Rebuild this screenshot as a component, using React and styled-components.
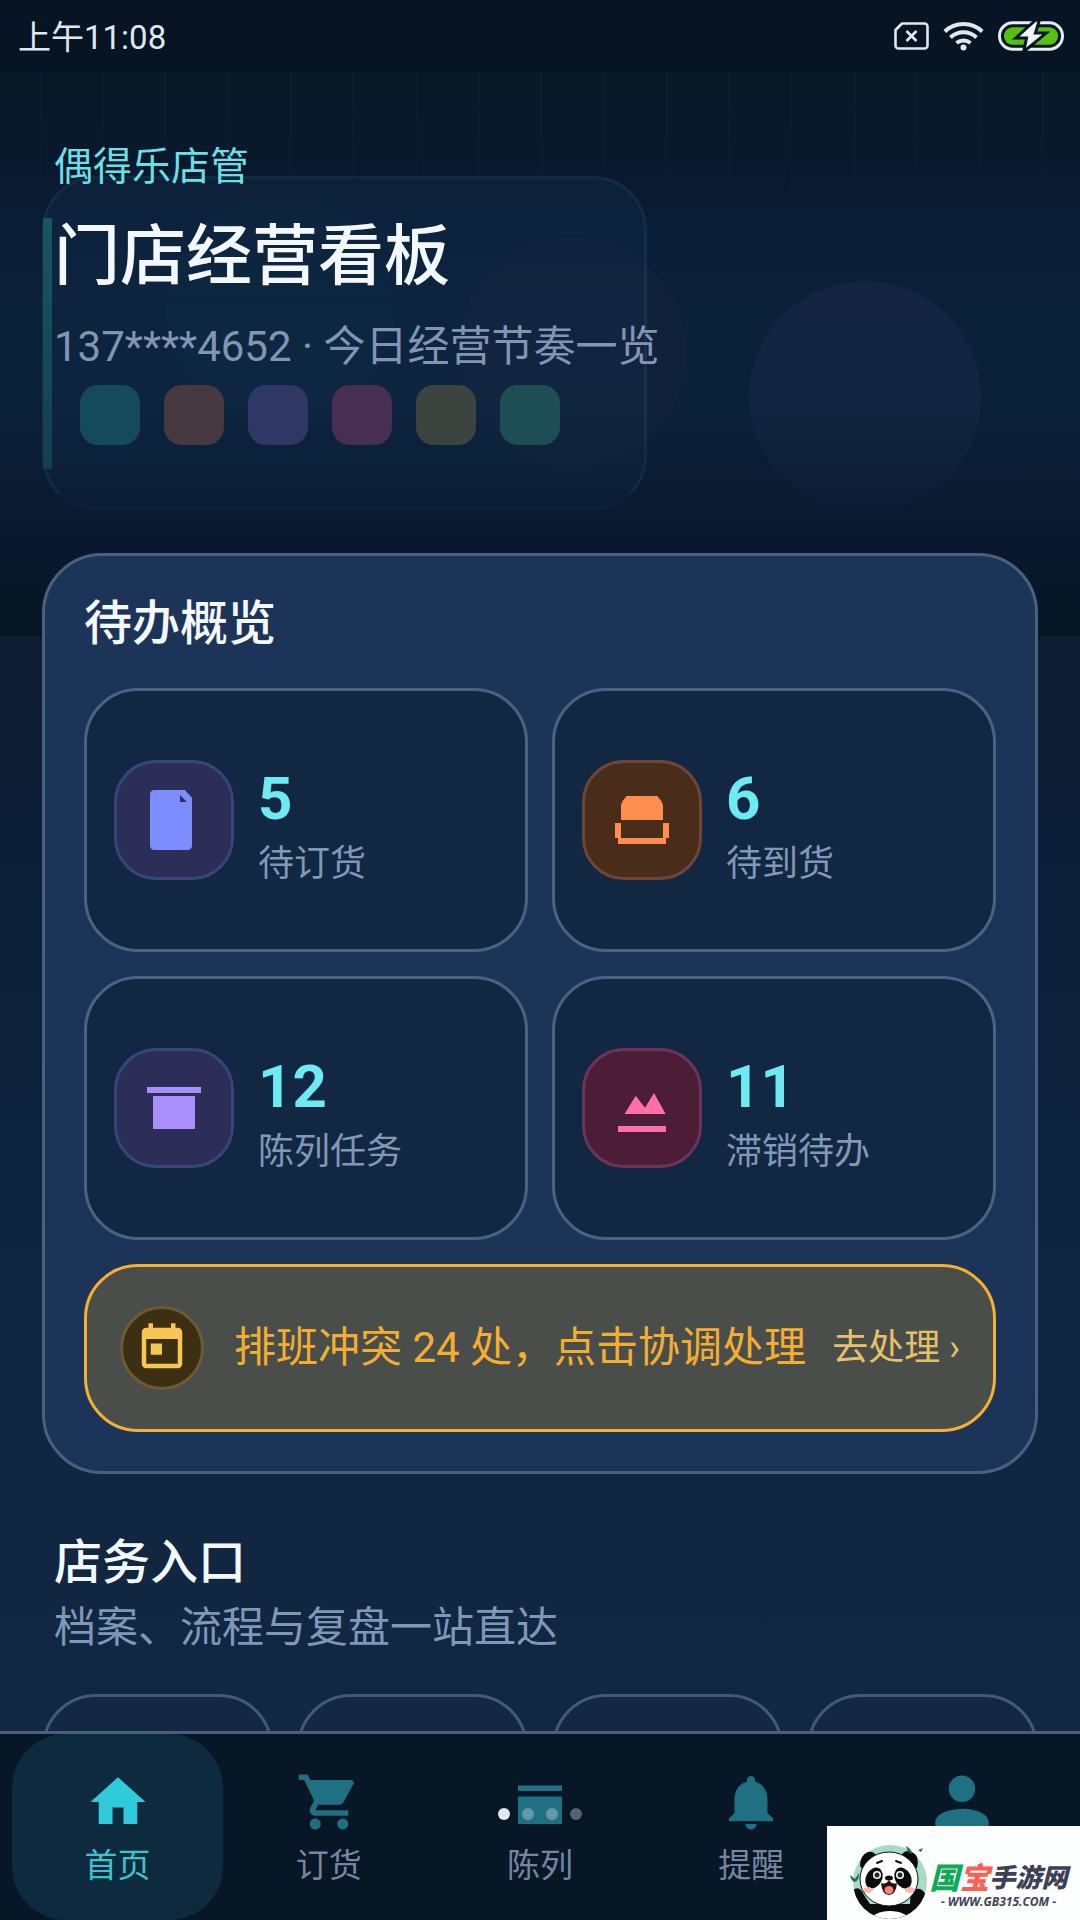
import React from "react";
import styled, { createGlobalStyle } from "styled-components";

const GlobalStyle = createGlobalStyle`
  *, *::before, *::after { box-sizing: border-box; }
  body {
    margin: 0;
    background: #0d1e33;
    color: #f3f8ff;
    font-family: Roboto, "Noto Sans CJK SC", sans-serif;
  }
  h1, h2, p, ul { margin: 0; padding: 0; }
  ul { list-style: none; }
  button { font: inherit; color: inherit; text-align: left; cursor: pointer; }
`;

const Screen = styled.div`
  position: relative;
  display: flex;
  flex-direction: column;
  height: 100vh;
  overflow: hidden;
  background: linear-gradient(180deg, #0c1c2f 0%, #0d1c30 34%, #0c1e37 44%, #0f2540 66%, #122842 90%);
`;

const StatusBar = styled.header`
  display: flex;
  align-items: center;
  justify-content: space-between;
  height: 72px;
  padding: 0 16px 0 18px;
  background: #061423;
  color: #dfe8f2;
`;

const Clock = styled.time`
  padding-top: 4px;
  font-size: 33px;
  line-height: 48px;
`;

const StatusIcons = styled.div`
  display: flex;
  align-items: center;
  gap: 14px;
`;

const Content = styled.main`
  flex: 1;
  min-height: 0;
  overflow-y: auto;
  scrollbar-width: none;
`;

const Hero = styled.section`
  position: relative;
  padding: 71px 54px 176px;
`;

const Backdrop = styled.div`
  position: absolute;
  inset: 0 0 -83px;
  overflow: hidden;
  background: linear-gradient(180deg, #081826 0%, #09182a 12%, #0b1d36 28%, #0b2039 44%, #0b2039 60%, #0b1b32 74%, #09182e 84%, #061621 100%);
`;

const BackdropDrawing = styled.svg`
  position: absolute;
  inset: 0;
  width: 100%;
  height: 100%;
`;

const GhostCard = styled.div`
  position: absolute;
  top: 104px;
  left: 42px;
  width: 56%;
  height: 334px;
  padding: 206px 35px 0;
  border: 3px solid rgba(70, 170, 180, 0.09);
  border-bottom-color: rgba(70, 170, 180, 0.02);
  border-radius: 54px;
  background: linear-gradient(180deg, rgba(24, 60, 96, 0.2), rgba(24, 60, 96, 0.12));
`;

const GhostBar = styled.div`
  position: absolute;
  top: 146px;
  left: 43px;
  width: 9px;
  height: 251px;
  background: linear-gradient(180deg, #175661, #143f50);
`;

const Swatches = styled.div`
  display: flex;
  gap: 24px;
`;

const Swatch = styled.span`
  width: 60px;
  height: 60px;
  border-radius: 18px;
  background: ${(p) => p.$color};
`;

const HeroText = styled.div`
  position: relative;
`;

const Brand = styled.p`
  font-size: 39px;
  line-height: 48px;
  color: #6ddfe6;
`;

const PageTitle = styled.h1`
  margin: 21px 0 15px;
  font-size: 66px;
  font-weight: 500;
  line-height: 90px;
`;

const Subtitle = styled.p`
  font-size: 42px;
  line-height: 60px;
  color: #8295b3;
`;

const Card = styled.section`
  position: relative;
  margin: 0 42px;
  padding: 39px;
  border: 3px solid #4a607e;
  border-radius: 60px;
  background: #1c3458;
`;

const SectionTitle = styled.h2`
  font-size: 48px;
  font-weight: 500;
  line-height: 58px;
`;

const StatGrid = styled.div`
  display: grid;
  grid-template-columns: 1fr 1fr;
  gap: 24px;
  margin: 35px 0 24px;
`;

const StatTile = styled.button`
  display: flex;
  align-items: center;
  gap: 24px;
  height: 264px;
  padding: 0 27px;
  border: 3px solid #4b6380;
  border-radius: 54px;
  background: #122842;
`;

const IconBadge = styled.span`
  display: grid;
  place-items: center;
  flex: none;
  width: 120px;
  height: 120px;
  border: 3px solid ${(p) => p.$border};
  border-radius: 42px;
  background: ${(p) => p.$bg};
  color: ${(p) => p.$color};
`;

const StatText = styled.span`
  display: flex;
  flex-direction: column;
  gap: 2px;
  padding-top: 14px;
`;

const StatValue = styled.strong`
  font-size: 60px;
  font-weight: 700;
  line-height: 72px;
  color: #6eeaf2;
`;

const StatLabel = styled.span`
  font-size: 36px;
  line-height: 54px;
  color: #8198b6;
`;

const Banner = styled.button`
  display: flex;
  align-items: center;
  width: 100%;
  height: 168px;
  padding: 0 33px;
  border: 3px solid #f4b030;
  border-radius: 54px;
  background: #4a4e4b;
`;

const BannerBadge = styled.span`
  display: grid;
  place-items: center;
  flex: none;
  width: 84px;
  height: 84px;
  border: 3px solid #6b5a34;
  border-radius: 50%;
  background: #3d2f12;
  color: #f7c654;
`;

const BannerText = styled.span`
  flex: 1;
  margin-left: 30px;
  font-size: 42px;
  line-height: 60px;
  white-space: nowrap;
  color: #f3ae31;
`;

const BannerAction = styled.span`
  font-size: 36px;
  line-height: 60px;
  white-space: nowrap;
  color: #e5c268;
`;

const EntrySection = styled.section`
  padding: 60px 42px 42px;
`;

const EntryHeading = styled.div`
  padding: 0 12px;
`;

const EntryNote = styled.p`
  margin-top: 6px;
  font-size: 42px;
  line-height: 60px;
  color: #7f98b7;
`;

const EntryGrid = styled.ul`
  display: grid;
  grid-template-columns: repeat(4, 1fr);
  gap: 24px;
  margin-top: 36px;
`;

const EntryTile = styled.li`
  height: 264px;
  border: 3px solid #435978;
  border-radius: 54px;
  background: #142743;
`;

const TabBar = styled.nav`
  position: relative;
  display: flex;
  padding: 0 12px;
  border-top: 3px solid #4b5f7b;
  background: #071726;
`;

const Tab = styled.button`
  flex: 1;
  display: flex;
  flex-direction: column;
  align-items: center;
  gap: 7px;
  height: 186px;
  padding: 35px 0 0;
  border: 0;
  border-radius: 54px;
  background: ${(p) => (p.$active ? "#0e2a3f" : "transparent")};
  color: ${(p) => (p.$active ? "#2fcbda" : "#1f7083")};
`;

const TabLabel = styled.span`
  font-size: 33px;
  line-height: 48px;
  color: ${(p) => (p.$active ? "#3ac4d0" : "#7786a0")};
`;

const PagerDots = styled.div`
  position: absolute;
  top: 74px;
  left: 50%;
  display: flex;
  gap: 12px;
  transform: translateX(-50%);
`;

const Dot = styled.span`
  width: 12px;
  height: 12px;
  border-radius: 50%;
  background: ${(p) => (p.$on ? "#e3e8ee" : "rgba(225, 232, 240, 0.36)")};
`;

const SiteMark = styled.aside`
  position: absolute;
  right: 0;
  bottom: 0;
  display: flex;
  align-items: flex-end;
  width: 253px;
  height: 94px;
  padding: 0 12px 0 22px;
  background: #fcfdfd;
`;

const MarkText = styled.div`
  flex: 1;
  display: flex;
  flex-direction: column;
  align-items: center;
  padding-bottom: 10px;
  font-family: "Noto Sans CJK SC", sans-serif;
  font-style: italic;
  font-weight: 900;
  white-space: nowrap;
`;

const MarkName = styled.div`
  display: flex;
  align-items: center;
  line-height: 36px;
`;

const MarkChar = styled.span`
  font-size: ${(p) => (p.$large ? 30 : 26)}px;
  color: ${(p) => p.$color};
`;

const MarkUrl = styled.div`
  font-family: "Open Sans", sans-serif;
  font-size: 12px;
  font-weight: 700;
  line-height: 16px;
  color: #3d4157;
`;

const Icon = ({ size, children }) => (
  <svg width={size} height={size} viewBox="0 0 24 24" fill="currentColor" aria-hidden="true">
    {children}
  </svg>
);

const docIcon = (
  <path fillRule="evenodd" d="M5.4 2h10.2L18 4.6v16a1.4 1.4 0 0 1-1.4 1.4H5.4A1.4 1.4 0 0 1 4 20.600V3.400A1.4 1.4 0 0 1 5.400 2zM14 3.700V6h2.300z" />
);
const arrivalIcon = (
  <path d="M6.900 4h10.200Q18.600 5.500 19 7v5H5V7Q5.400 5.500 6.900 4zM3 13h2v5h14v-5h2v5h-1v2H4v-2H3z" />
);
const shelfIcon = <path d="M3 5h18v2H3zM5 8h14v11H5z" />;
const slowIcon = <path d="M6.200 14 9.900 7.900 13 11.900 16 7l3.900 7zM4 18h16v2H4z" />;
const calendarIcon = (
  <path d="M19 3h-1V1h-2v2H8V1H6v2H5c-1.110 0-1.990.9-1.990 2L3 19c0 1.100.89 2 2 2h14c1.100 0 2-.9 2-2V5c0-1.100-.9-2-2-2zm0 16H5V8h14v11zM7 10h5v5H7z" />
);

const stats = [
  { value: 5, label: "待订货", icon: docIcon, bg: "#2c2e57", border: "#374579", color: "#7c8dff" },
  { value: 6, label: "待到货", icon: arrivalIcon, bg: "#492d1a", border: "#6b4639", color: "#ff8f50" },
  { value: 12, label: "陈列任务", icon: shelfIcon, bg: "#2c2e57", border: "#374579", color: "#a98ffc" },
  { value: 11, label: "滞销待办", icon: slowIcon, bg: "#4b1d37", border: "#6c3459", color: "#ff6fa8" },
];

const tabs = [
  { id: "home", label: "首页", active: true, icon: <path d="M10 20v-6h4v6h5v-8h3L12 3 2 12h3v8z" /> },
  {
    id: "order",
    label: "订货",
    icon: (
      <path d="M7 18c-1.100 0-1.990.9-1.990 2S5.900 22 7 22s2-.9 2-2-.9-2-2-2zM1 2v2h2l3.600 7.590-1.350 2.450c-.16.280-.25.610-.25.960 0 1.100.9 2 2 2h12v-2H7.420c-.14 0-.25-.11-.25-.25l.03-.12.900-1.630h7.450c.75 0 1.410-.41 1.750-1.030l3.580-6.490A1 1 0 0 0 20 4H5.210l-.94-2H1zm16 16c-1.100 0-1.990.9-1.990 2s.89 2 1.990 2 2-.9 2-2-.9-2-2-2z" />
    ),
  },
  { id: "display", label: "陈列", icon: <path d="M4 6h16v2H4zM4 10h16v10H4z" /> },
  {
    id: "alerts",
    label: "提醒",
    icon: (
      <path d="M12 22c1.100 0 2-.9 2-2h-4c0 1.100.89 2 2 2zm6-6v-5c0-3.070-1.640-5.640-4.500-6.320V4c0-.83-.67-1.500-1.500-1.500s-1.500.67-1.500 1.500v.68C7.630 5.360 6 7.920 6 11v5l-2 2v1h16v-1l-2-2z" />
    ),
  },
  {
    id: "profile",
    icon: (
      <>
        <circle cx="12" cy="7.200" r="4.800" />
        <path d="M12 14.500c-5 0-9.700 1.800-9.700 4.800V22h19.400v-2.700c0-3-4.700-4.800-9.700-4.800z" />
      </>
    ),
  },
];

const swatchColors = ["#144a5c", "#463a40", "#2f3765", "#462f50", "#3b443f", "#1c4e53"];
const gridColumns = Array.from({ length: 17 }, (_, i) => 40 + Math.round(i * 62.6));

function HeroBackdrop() {
  return (
    <Backdrop aria-hidden="true">
      <BackdropDrawing>
        <defs>
          <linearGradient id="gridFade" x1="0" y1="0" x2="0" y2="1">
            <stop offset="0" stopColor="#5fc0b8" stopOpacity="0.06" />
            <stop offset="1" stopColor="#5fc0b8" stopOpacity="0.01" />
          </linearGradient>
          <linearGradient id="discFade" x1="0" y1="0" x2="0" y2="1">
            <stop offset="0" stopColor="#3c3a66" stopOpacity="0.2" />
            <stop offset="0.6" stopColor="#3c3a66" stopOpacity="0.15" />
            <stop offset="1" stopColor="#2c3a60" stopOpacity="0.04" />
          </linearGradient>
        </defs>
        {gridColumns.map((x) => (
          <rect key={x} x={x} y="0" width="1" height="120" fill="url(#gridFade)" />
        ))}
        <circle cx="281" cy="238" r="115" fill="#1a5060" opacity="0.06" />
        <circle cx="572" cy="281" r="115" fill="#50304a" opacity="0.09" />
        <circle cx="865" cy="325" r="116" fill="url(#discFade)" />
      </BackdropDrawing>
      <GhostCard>
        <Swatches>
          {swatchColors.map((color) => (
            <Swatch key={color} $color={color} />
          ))}
        </Swatches>
      </GhostCard>
      <GhostBar />
    </Backdrop>
  );
}

function SystemIcons() {
  return (
    <StatusIcons>
      <svg width="35" height="28" viewBox="0 0 35 28" fill="none" stroke="currentColor" strokeWidth="2.600">
        <path d="M8 1.500h22.500a3 3 0 0 1 3 3v19a3 3 0 0 1-3 3h-26a3 3 0 0 1-3-3V8z" strokeLinejoin="round" />
        <path d="m12.500 9 10 10m0-10-10 10" />
      </svg>
      <svg width="41" height="30" viewBox="0 0 41 30" fill="none" stroke="currentColor" strokeWidth="4">
        <path d="M1.800 10.500a27 27 0 0 1 37.400 0" />
        <path d="M7.500 16.500a19 19 0 0 1 26 0" />
        <path d="M13.500 22a11 11 0 0 1 14 0" />
        <circle cx="20.500" cy="26.500" r="3" fill="currentColor" stroke="none" />
      </svg>
      <svg width="66" height="30" viewBox="0 0 67 30">
        <rect x="1.500" y="1.500" width="64" height="27" rx="13.500" fill="#061423" stroke="#e6edf6" strokeWidth="3" />
        <rect x="6" y="6" width="55" height="18" rx="9" fill="#55c213" />
        <path d="M38 -1 18 17h11l-3 14L49 12H38l4-13z" fill="#eef5ff" stroke="#061423" strokeWidth="3" />
      </svg>
    </StatusIcons>
  );
}

function Panda() {
  return (
    <svg width="80" height="76" viewBox="0 0 80 76" aria-hidden="true">
      <defs>
        <clipPath id="disc">
          <circle cx="41" cy="38" r="37" />
        </clipPath>
      </defs>
      <circle cx="41" cy="38" r="37" fill="#a6dcc4" />
      <g clipPath="url(#disc)">
        <path d="M4 46q7-5 11 5l6 9h40q0-17 10-15 7 3 8 14L66 78H14z" fill="#0b0b0d" />
        <ellipse cx="41" cy="76" rx="19" ry="9" fill="#fff" />
      </g>
      <path d="M11 22q0-11 8-14 5-1 8 3L14 26zM68 24q3-12-5-16-6-3-10 2l11 16z" fill="#0b0b0d" />
      <ellipse cx="40" cy="35" rx="29" ry="27" fill="#fff" stroke="#111" strokeWidth="1" />
      <ellipse cx="25" cy="34" rx="8" ry="11" transform="rotate(28 25 34)" fill="#0b0b0d" />
      <ellipse cx="54" cy="34" rx="8" ry="11" transform="rotate(-28 54 34)" fill="#0b0b0d" />
      <circle cx="28" cy="31" r="4" fill="#fff" />
      <circle cx="28" cy="31" r="2.500" fill="#2b2522" />
      <circle cx="51" cy="31" r="4" fill="#fff" />
      <circle cx="51" cy="31" r="2.500" fill="#2b2522" />
      <path d="M28 19l5-2M47 17l5 2" stroke="#111" strokeWidth="2" strokeLinecap="round" />
      <ellipse cx="40" cy="34" rx="4" ry="2.500" fill="#111" />
      <path d="M32 39q5 2 8-3 3 5 8 3-1 12-8 12t-8-12z" fill="#24120f" />
      <ellipse cx="40" cy="46" rx="4.500" ry="4" fill="#f4837b" />
      <ellipse cx="19" cy="46" rx="5" ry="3" fill="#f9b9b0" />
      <ellipse cx="61" cy="46" rx="5" ry="3" fill="#f9b9b0" />
      <path d="M57 2q6 3 6 8-5-2-6-8zM1 31l5 4 4-6q0 8-4 9-4-1-5-7zM69 6l3 2 2-4" fill="#23704f" />
    </svg>
  );
}

export default function App() {
  return (
    <Screen>
      <GlobalStyle />
      <StatusBar>
        <Clock>上午11:08</Clock>
        <SystemIcons />
      </StatusBar>
      <Content>
        <Hero>
          <HeroBackdrop />
          <HeroText>
            <Brand>偶得乐店管</Brand>
            <PageTitle>门店经营看板</PageTitle>
            <Subtitle>137****4652 · 今日经营节奏一览</Subtitle>
          </HeroText>
        </Hero>
        <Card>
          <SectionTitle>待办概览</SectionTitle>
          <StatGrid>
            {stats.map((s) => (
              <StatTile key={s.label} type="button">
                <IconBadge $bg={s.bg} $border={s.border} $color={s.color}>
                  <Icon size={72}>{s.icon}</Icon>
                </IconBadge>
                <StatText>
                  <StatValue>{s.value}</StatValue>
                  <StatLabel>{s.label}</StatLabel>
                </StatText>
              </StatTile>
            ))}
          </StatGrid>
          <Banner type="button">
            <BannerBadge>
              <Icon size={54}>{calendarIcon}</Icon>
            </BannerBadge>
            <BannerText>排班冲突 24 处，点击协调处理</BannerText>
            <BannerAction>去处理 ›</BannerAction>
          </Banner>
        </Card>
        <EntrySection>
          <EntryHeading>
            <SectionTitle>店务入口</SectionTitle>
            <EntryNote>档案、流程与复盘一站直达</EntryNote>
          </EntryHeading>
          <EntryGrid>
            <EntryTile />
            <EntryTile />
            <EntryTile />
            <EntryTile />
          </EntryGrid>
        </EntrySection>
      </Content>
      <TabBar>
        {tabs.map((t) => (
          <Tab key={t.id} type="button" $active={t.active}>
            <Icon size={66}>{t.icon}</Icon>
            {t.label && <TabLabel $active={t.active}>{t.label}</TabLabel>}
          </Tab>
        ))}
        <PagerDots>
          <Dot $on />
          <Dot />
          <Dot />
          <Dot />
        </PagerDots>
      </TabBar>
      <SiteMark>
        <Panda />
        <MarkText>
          <MarkName>
            <MarkChar $large $color="#12a75a">国</MarkChar>
            <MarkChar $large $color="#fb5f55">宝</MarkChar>
            <MarkChar $color="#3d4157">手游网</MarkChar>
          </MarkName>
          <MarkUrl>- WWW.GB315.COM -</MarkUrl>
        </MarkText>
      </SiteMark>
    </Screen>
  );
}
